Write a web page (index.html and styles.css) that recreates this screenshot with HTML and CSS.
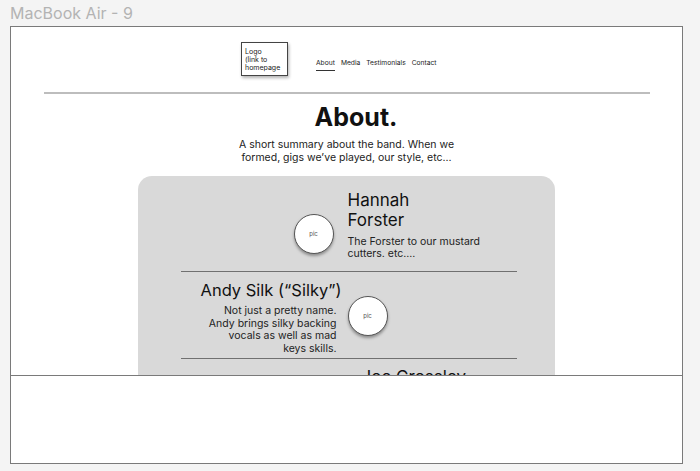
FILE: index.html
```html
<!DOCTYPE html>
<html>
<head>
    <title>MacBook Air - 9</title>
    <link rel="stylesheet" href="styles.css">
</head>
<body>
    <div class="frame-label">MacBook Air - 9</div>
    <div class="frame">
        <div class="viewport">
            <header class="header">
                <a class="logo" href="#">Logo<br>(link to<br>homepage</a>
                <nav class="nav">
                    <a href="#" class="active">About</a>
                    <a href="#">Media</a>
                    <a href="#">Testimonials</a>
                    <a href="#">Contact</a>
                </nav>
            </header>
            <div class="rule"></div>

            <h1 class="title">About.</h1>
            <p class="summary">A short summary about the band. When we<br>formed, gigs we’ve played, our style, etc...</p>

            <div class="card">
                <div class="member">
                    <div class="pic pic-left">pic</div>
                    <div class="info">
                        <h2 class="name name-wrap">Hannah Forster</h2>
                        <p class="desc">The Forster to our mustard cutters. etc....</p>
                    </div>
                </div>
                <div class="divider"></div>
                <div class="member flip">
                    <div class="info">
                        <h2 class="name">Andy Silk (“Silky”)</h2>
                        <p class="desc">Not just a pretty name. Andy brings silky backing vocals as well as mad keys&nbsp;skills.</p>
                    </div>
                    <div class="pic pic-right">pic</div>
                </div>
                <div class="divider"></div>
                <div class="member member-top">
                    <div class="pic pic-left pic-low">pic</div>
                    <div class="info">
                        <h2 class="name name-joe">Joe Crossley</h2>
                        <p class="desc">Keeps the beat going. Drums, mostly. etc....</p>
                    </div>
                </div>
            </div>
        </div>
    </div>
</body>
</html>
```

FILE: styles.css
```css
* {
    box-sizing: border-box;
}

body {
    margin: 0;
    background: #f4f4f4;
    font-family: Inter, "Liberation Sans", sans-serif;
    color: #111;
}

.frame-label {
    padding: 3px 0 0 10px;
    height: 26px;
    font-size: 16px;
    color: #b3b3b3;
}

.frame {
    margin-left: 10px;
    width: 673px;
    height: 438px;
    background: #fff;
    border: 1.5px solid #7a7a7a;
}

.viewport {
    height: 349px;
    overflow: hidden;
    border-bottom: 1.5px solid #7a7a7a;
}

/* header */
.header {
    display: flex;
    align-items: flex-start;
    padding: 15px 0 0 230px;
}

.logo {
    display: block;
    width: 47px;
    height: 34px;
    padding: 5px 0 0 3px;
    font-size: 7px;
    line-height: 8px;
    color: #222;
    text-decoration: none;
    border: 1px solid #444;
    box-shadow: 1px 2px 3px rgba(0,0,0,0.3);
}

.nav {
    display: flex;
    gap: 6px;
    margin: 17px 0 0 28px;
}

.nav a {
    font-size: 6.7px;
    color: #222;
    text-decoration: none;
    padding-bottom: 3px;
}

.nav a.active {
    border-bottom: 1px solid #333;
}

.rule {
    margin: 16px 0 0 33px;
    width: 606px;
    height: 2px;
    background: #bdbdbd;
}

.title {
    margin: 8px 0 0 19px;
    text-align: center;
    font-size: 25px;
    line-height: 30px;
    font-weight: 700;
}

.summary {
    margin: 6px 0 0;
    text-align: center;
    font-size: 10.5px;
    line-height: 13px;
    color: #222;
}

/* band members */
.card {
    margin: 12px auto 0;
    width: 417px;
    padding-top: 14px;
    background: #d9d9d9;
    border-radius: 14px;
    height: 300px;
}

.member {
    display: grid;
    grid-template-columns: 1fr 1fr;
    column-gap: 6px;
    align-items: center;
}

.member-top {
    align-items: start;
}

.info {
    margin-left: -2px;
    padding-bottom: 11px;
}

.pic {
    width: 40px;
    height: 40px;
    border-radius: 50%;
    background: #fff;
    border: 1px solid #555;
    box-shadow: 0 2px 3px rgba(0,0,0,0.35);
    display: flex;
    align-items: center;
    justify-content: center;
    font-size: 6px;
    color: #555;
}

.pic-left {
    justify-self: end;
    margin: 6px 10px 0 0;
}

.pic-right {
    justify-self: start;
    margin: 0 0 6px -2px;
}

.pic-low {
    margin-top: 40px;
}

.name {
    margin: 0;
    font-size: 17px;
    line-height: 20px;
    font-weight: 400;
}

.name-wrap {
    width: 90px;
}

.desc {
    margin: 6px 0 0;
    width: 140px;
    font-size: 10.5px;
    line-height: 12px;
    color: #222;
}

.flip .info {
    margin-left: 0;
    text-align: right;
    padding: 0 2px 2px 0;
}

.flip .name {
    font-size: 16.5px;
}

.flip .desc {
    width: 134px;
    margin: 5px 5px 0 auto;
    line-height: 12.7px;
}

.name-joe {
    margin-left: 14px;
}

.divider {
    margin: 0 38px 0 43px;
    height: 1px;
    background: #707070;
}

.divider + .member {
    padding-top: 8px;
}
```
